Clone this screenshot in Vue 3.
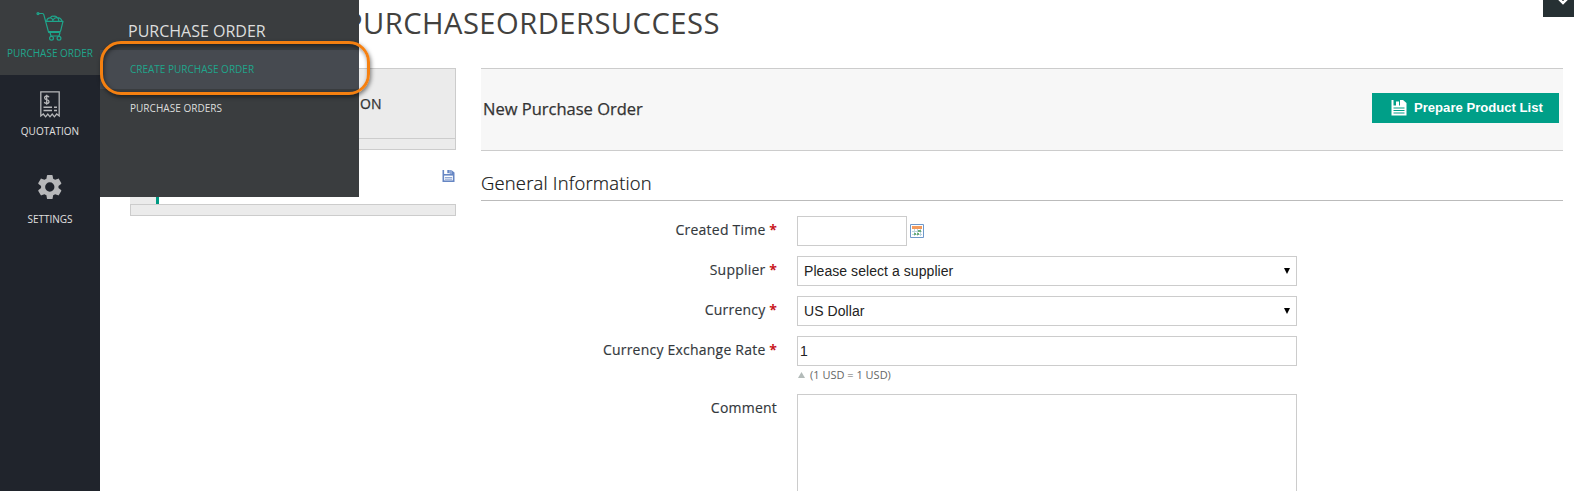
<script setup>
const nav = [
  { label: 'PURCHASE ORDER', icon: 'cart' },
  { label: 'QUOTATION', icon: 'receipt' },
  { label: 'SETTINGS', icon: 'gear' },
]
const selects = [
  { label: 'Supplier', value: 'Please select a supplier' },
  { label: 'Currency', value: 'US Dollar' },
]
</script>

<template>
  <div class="page">
    <nav class="sidebar">
      <div v-for="n in nav" :key="n.icon" class="nav-item" :class="n.icon">
        <svg v-if="n.icon === 'cart'" width="28" height="29" viewBox="0 0 28 29" fill="none" stroke="currentColor" stroke-width="1.2" stroke-linecap="round" stroke-linejoin="round">
          <path d="M3 1.5H6.5Q7.5 1.5 7.8 2.6L12.6 20.3H24M9.7 9.4H27L24.7 18.6Q24.4 19.7 23.4 19.7H12.5M14 20.5L15 24H23L24 20.5" />
          <circle cx="2" cy="1.6" r="1" />
          <path d="M10.8 9Q11 5.6 14.5 5.8Q15.2 3.8 18 4.3Q20 3.8 21.2 5.6Q25 5.8 26 9M14.5 5.8Q16.8 6.5 17 9M17 8Q18.5 5.2 21.2 5.6Q22.8 6.8 22.8 9" />
          <circle cx="15.5" cy="26.3" r="1.9" /><circle cx="23" cy="26.3" r="1.9" />
        </svg>
        <svg v-else-if="n.icon === 'receipt'" width="20" height="27" viewBox="0 0 20 27" fill="none" stroke="currentColor" stroke-width="1.3">
          <path d="M.8 25V.8H19.2V25L16.7 23L14.4 25.8L12.2 23L10 25.8L7.8 23L5.6 25.8L3.3 23Z" />
          <path d="M9 6.2Q8.5 5 6.7 5Q4.6 5 4.6 6.7Q4.6 8.2 6.7 8.6Q9 9 9 10.7Q9 12.4 6.7 12.4Q4.7 12.4 4.4 11M6.7 3.7V13.8" />
          <path stroke-width="1.6" d="M3.5 16.3H12M14 16.3H17M3.5 19.5H12M14 19.5H17" />
        </svg>
        <svg v-else width="26" height="26" viewBox="0 0 24 24" fill="currentColor">
          <path fill-rule="evenodd" d="M19.8 13a8 8 0 0 0 0-2l2.4-1.8c.3-.2.3-.5.2-.8l-2.2-3.8c-.1-.3-.4-.4-.7-.3l-2.8 1.1a8 8 0 0 0-1.8-1L14.4 1.4c0-.3-.3-.5-.6-.5H9.8c-.3 0-.6.2-.6.5L8.7 4.4c-.7.3-1.3.6-1.8 1L4.1 4.3c-.3-.1-.6 0-.7.3L1.2 8.4c-.1.3-.1.6.2.8L3.8 11a8 8 0 0 0 0 2l-2.4 1.8c-.3.2-.3.5-.2.8l2.2 3.8c.1.3.4.4.7.3l2.8-1.1c.5.4 1.1.8 1.8 1l.5 3c0 .3.3.5.6.5h4c.3 0 .6-.2.6-.5l.5-3c.7-.2 1.3-.6 1.8-1l2.8 1.1c.3.1.6 0 .7-.3l2.2-3.8c.1-.3.1-.6-.2-.8zM11.8 7.7a4.3 4.3 0 1 1 0 8.6 4.3 4.3 0 0 1 0-8.6z" />
        </svg>
        <span>{{ n.label }}</span>
      </div>
    </nav>

    <div class="content">
      <h1>PURCHASEORDERSUCCESS</h1>
      <div class="columns">
        <aside>
          <div class="box top"><span>ON</span></div>
          <div class="box-foot"></div>
          <div class="tab">
            <svg width="13" height="12" viewBox="0 0 15 15">
              <path fill="#6686c3" d="M0 0H2V5H11V0L15 3V15H0Z" /><path fill="#6686c3" d="M6 0H9V4H6Z" /><path fill="#8aa5d6" d="M9 0H11V5H9Z" />
              <path fill="#fff" d="M2 7H13V13H2Z" /><path stroke="#6686c3" d="M3 9.5H12M3 11.5H12" />
            </svg>
          </div>
          <div class="box-foot last"></div>
        </aside>

        <main>
          <header>
            <h2>New Purchase Order</h2>
            <button>
              <svg width="16" height="16" viewBox="0 0 16 16">
                <path fill="#fff" d="M.5 0H2.5V5.5H5V1.5H8V5.5H9V0H12L15.5 3V15.5H.5Z" />
                <path stroke="#009f88" stroke-width="1.2" d="M2.5 8H13.5M2.5 10.5H13.5M2.5 13H13.5" />
              </svg>
              <span>Prepare Product List</span>
            </button>
          </header>
          <h3>General Information</h3>
          <form>
            <div class="row">
              <label>Created Time <b>*</b></label>
              <div class="field short"></div>
              <svg class="cal" width="14" height="14" viewBox="0 0 14 14">
                <path fill="#fff" stroke="#6e98ca" d="M.5.5H13.5V13.5H.5Z" />
                <path fill="#f39b5d" d="M2 2H12V5H2Z" />
                <path stroke="#bdd5df" d="M2 7.5H12M2 10.5H12M4.5 5V12M7.5 5V12M10.5 5V12" />
                <path fill="#69ad78" d="M8 6H11V8H8ZM4 9H6V11H4ZM7 9H9V11H7Z" />
              </svg>
            </div>
            <div v-for="s in selects" :key="s.label" class="row">
              <label>{{ s.label }} <b>*</b></label>
              <div class="field select"><span>{{ s.value }}</span>
                <svg width="6" height="6" viewBox="0 0 6 6"><path d="M0 0H6L3 6Z" /></svg>
              </div>
            </div>
            <div class="row rate">
              <label>Currency Exchange Rate <b>*</b></label>
              <div class="field">1</div>
            </div>
            <div class="hint"><svg width="7" height="6" viewBox="0 0 7 6"><path fill="#b3bbb9" d="M3.5 0L7 6H0Z" /></svg><span>(1 USD = 1 USD)</span></div>
            <div class="row">
              <label>Comment</label>
              <div class="field area"></div>
            </div>
          </form>
        </main>
      </div>
    </div>

    <section class="flyout">
      <h4>PURCHASE ORDER</h4>
      <a class="active">CREATE PURCHASE ORDER</a>
      <a>PURCHASE ORDERS</a>
    </section>
    <div class="ring"></div>
    <div class="corner">
      <svg width="12" height="6" viewBox="0 0 12 6" fill="none" stroke="#fff" stroke-width="2.5"><path d="M1-2L6 3L11-2" /></svg>
    </div>
  </div>
</template>

<style>
body { background: #fff; overflow: hidden; }
</style>

<style scoped>
* { box-sizing: border-box; margin: 0; }
svg { display: block; flex: none; }
.page { position: relative; display: flex; width: 1574px; height: 491px; overflow: hidden; font-family: "Open Sans", "Noto Sans", sans-serif; color: #333; white-space: nowrap; }
.sidebar { width: 100px; flex: none; background: #20242c; color: #b7b8ba; }
.nav-item { display: flex; flex-direction: column; align-items: center; }
.nav-item span { font-size: 10px; line-height: 14px; color: #e0e0e0; }
.cart { height: 75px; padding-top: 12px; background: #3a3d3f; color: #1fa58b; }
.nav-item.cart span { color: #1fa58b; margin-top: 5px; }
.receipt { height: 85px; padding-top: 16px; }
.receipt span { margin-top: 6px; }
.gear { padding-top: 14px; }
.gear span { margin-top: 12px; }
.content { width: 1463px; padding-left: 30px; }
h1 { height: 68px; padding-left: 215px; font-size: 29.2px; font-weight: 400; line-height: 46px; letter-spacing: .45px; color: #42413e; }
.columns { display: flex; gap: 25px; }
aside { width: 326px; flex: none; }
.box { height: 71px; border: 1px solid #ccc; background: #ebebeb; padding: 24px 0 0 229px; font-size: 14px; line-height: 22px; -webkit-text-stroke: .25px; }
.box-foot { height: 11px; border: 1px solid #ccc; border-top: 0; background: #ebebeb; }
.tab { height: 54px; border-left: 26px solid #ebebeb; display: flex; justify-content: flex-end; padding: 20px 1px 0 0; box-shadow: inset 3px 0 #009a83; }
.last { height: 12px; border: 1px solid #ccc; }
main { flex: 1; }
header { height: 83px; display: flex; align-items: flex-start; justify-content: space-between; padding: 24px 4px 0 2px; border: solid #ccc; border-width: 1px 0; background: #f7f7f7; }
h2 { font-size: 16.5px; line-height: 32px; font-weight: 400; color: #333; -webkit-text-stroke: .25px; }
button { display: flex; align-items: center; width: 187px; height: 30px; border: 0; padding: 0 0 0 19px; gap: 7px; background: #009f88; color: #fff; font: bold 13.1px "Liberation Sans", sans-serif; }
button span { padding-bottom: 2px; }
h3 { height: 50px; padding-top: 17px; border-bottom: 1px solid #bbb; font-size: 18.4px; line-height: 30px; font-weight: 300; letter-spacing: .2px; color: #111; -webkit-text-stroke: .2px; }
form { padding-top: 15px; }
.row { display: flex; margin-bottom: 10px; }
label { width: 296px; margin-right: 20px; text-align: right; font-size: 14px; line-height: 28px; font-weight: 400; letter-spacing: .22px; color: #33383c; -webkit-text-stroke: .15px; }
label b { color: #c8161d; letter-spacing: 0; -webkit-text-stroke: 0; }
.field { width: 500px; height: 30px; border: 1px solid #ccc; font: 14px/28px "Liberation Sans", sans-serif; color: #222; padding-left: 2px; }
.short { width: 110px; }
.cal { margin: 8px 0 0 3px; }
.select { display: flex; align-items: center; justify-content: space-between; padding: 0 6px; letter-spacing: .06px; }
.rate { margin-bottom: 0; }
.hint { display: flex; align-items: center; height: 28px; padding: 0 0 11px 317px; gap: 5px; font-size: 11px; color: #666; }
.area { height: 120px; }
.flyout { position: absolute; left: 100px; top: 0; width: 259px; height: 197px; background: #3a3d3f; padding-top: 19px; color: #ddd; }
h4 { height: 31px; padding-left: 28px; font-size: 16px; line-height: 24px; font-weight: 400; }
.flyout a { display: block; height: 39px; padding-left: 30px; font-size: 10px; line-height: 39px; letter-spacing: .03px; }
.flyout .active { background: #464a50; color: #1fa58b; letter-spacing: 0; }
.ring { position: absolute; left: 100px; top: 41px; width: 270px; height: 54px; border: 3px solid #f58010; border-radius: 21px; box-shadow: 1px 2px 4px rgba(0,0,0,.5), inset 1px 2px 4px rgba(0,0,0,.45); }
.corner { position: absolute; right: 0; top: 0; width: 31px; height: 17px; background: #263033; padding-left: 14px; }
</style>
